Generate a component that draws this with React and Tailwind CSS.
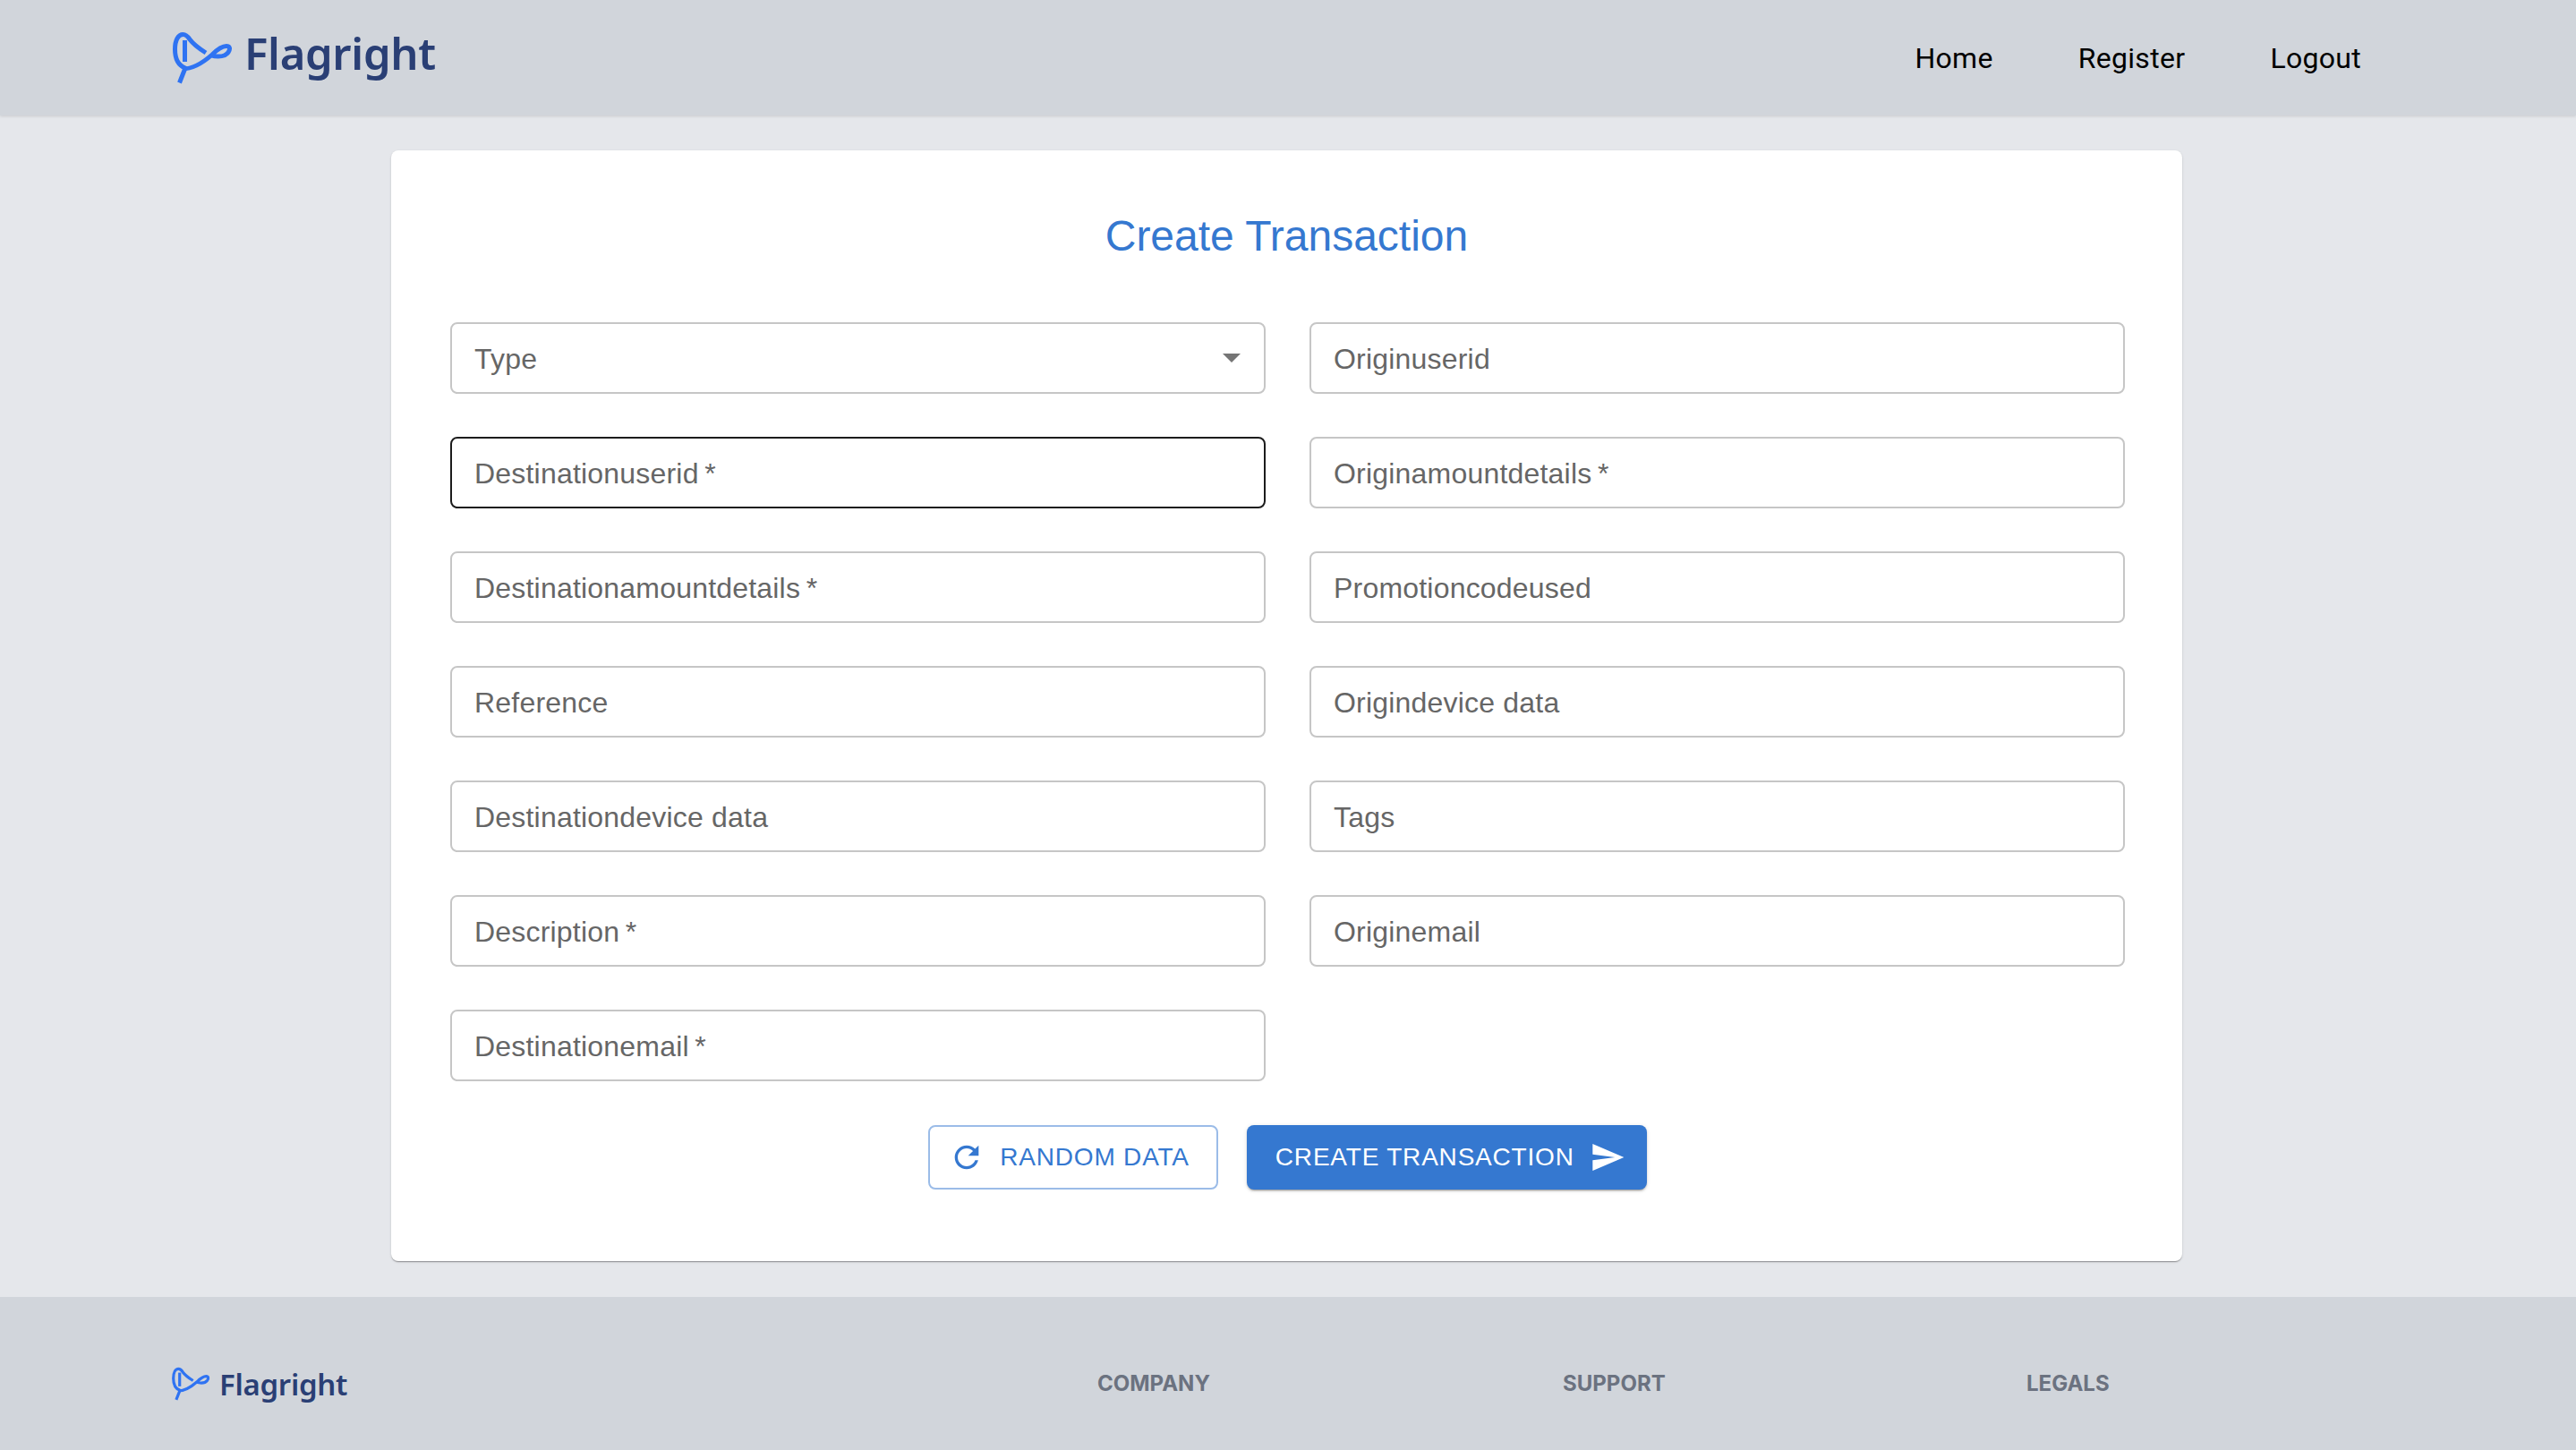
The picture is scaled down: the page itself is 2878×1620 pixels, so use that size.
const sans = "font-['Liberation_Sans',Arial,sans-serif]";

function Logo({ className }) {
  return (
    <svg viewBox="0 0 80 75" className={className} fill="none" stroke="#2f73f2" strokeWidth="5" strokeLinecap="butt" strokeLinejoin="round">
      <path d="M15.5 65.5 L22 49 C14 46 10.5 38 10.5 28 C10.5 18 14 11.5 19.5 11.5 C23 11.5 25 14 27 17 C30 21 37 27 45 32" />
      <path d="M21.5 42 L21.5 18" />
      <path d="M19 50 C31 50 43 42 52 34 C57 29 63 24.5 68 24.5 C72 24.5 72.5 28 70 31.5 C67 35.5 60 37.5 50 34.5" />
    </svg>
  );
}

function Field({ label, required, focused, select }) {
  return (
    <div className={`flex h-[80px] items-center rounded-lg border-2 bg-white pl-[25px] pr-[26px] ${focused ? "border-[#1c1c1c]" : "border-[#c6c6c6]"}`}>
      <span className={`${sans} pt-[1px] text-[32px] leading-none tracking-[0.2px] text-[#666666]`}>
        {label}
        {required && <span>{"\u2009*"}</span>}
      </span>
      {select && (
        <svg viewBox="0 0 20 10" className="ml-auto h-[10px] w-[20px]">
          <path d="M0 0 H20 L10 10 Z" fill="#757575" />
        </svg>
      )}
    </div>
  );
}

const fields = [
  { label: "Type", select: true },
  { label: "Originuserid" },
  { label: "Destinationuserid", required: true, focused: true },
  { label: "Originamountdetails", required: true },
  { label: "Destinationamountdetails", required: true },
  { label: "Promotioncodeused" },
  { label: "Reference" },
  { label: "Origindevice data" },
  { label: "Destinationdevice data" },
  { label: "Tags" },
  { label: "Description", required: true },
  { label: "Originemail" },
  { label: "Destinationemail", required: true },
];

export default function App() {
  return (
    <div className="flex min-h-screen flex-col bg-[#e5e7eb]">
      <header className="flex h-[129px] items-center justify-between bg-[#d1d5db] pl-[185px] pr-[240px] shadow-[0_1px_3px_rgba(0,0,0,0.12)]">
        <div className="flex items-center">
          <Logo className="h-[75px] w-[80px] shrink-0" />
          <span className="mb-[10px] ml-[8px] font-['Noto_Sans',sans-serif] text-[49px] font-semibold leading-none tracking-[-0.3px] text-[#2a3f75]">Flagright</span>
        </div>
        <nav className="flex gap-[95px] font-['Roboto',sans-serif] text-[32px] leading-none tracking-[0.3px] text-black">
          <a>Home</a>
          <a>Register</a>
          <a>Logout</a>
        </nav>
      </header>

      <main className="flex-1 pb-[40px] pt-[39px]">
        <div className="ml-[437px] w-[2001px] rounded-lg bg-white pb-[80px] pl-[66px] pr-[64px] pt-[64px] shadow-[0_2px_1px_-1px_rgba(0,0,0,0.2),0_1px_1px_rgba(0,0,0,0.14),0_1px_3px_rgba(0,0,0,0.12)]">
          <h1 className={`${sans} mb-[64px] pr-[2px] text-center text-[48px] leading-[64px] text-[#3578d0]`}>Create Transaction</h1>
          <div className="grid grid-cols-2 gap-x-[49px] gap-y-[48px]">
            {fields.map((f) => (
              <Field key={f.label} {...f} />
            ))}
          </div>
          <div className="mt-[49px] flex justify-center gap-[32px]">
            <button className={`${sans} flex h-[72px] items-center gap-[17px] rounded-lg border-2 border-[#9bbce8] bg-white pl-[21px] pr-[30px] text-[28px] tracking-[0.8px] text-[#3578d0]`}>
              <svg viewBox="0 0 24 24" className="h-[40px] w-[40px]" fill="#3578d0">
                <path d="M17.65 6.35C16.2 4.9 14.21 4 12 4c-4.42 0-7.99 3.58-7.99 8s3.57 8 7.99 8c3.73 0 6.84-2.55 7.73-6h-2.08c-.82 2.33-3.04 4-5.65 4-3.31 0-6-2.69-6-6s2.69-6 6-6c1.66 0 3.14.69 4.22 1.78L13 11h7V4l-2.35 2.35z" />
              </svg>
              RANDOM DATA
            </button>
            <button className={`${sans} flex h-[72px] items-center gap-[17px] rounded-lg bg-[#3578d0] pl-[32px] pr-[24px] text-[28px] tracking-[0.8px] text-white shadow-[0_3px_1px_-2px_rgba(0,0,0,0.2),0_2px_2px_rgba(0,0,0,0.14),0_1px_5px_rgba(0,0,0,0.12)]`}>
              CREATE TRANSACTION
              <svg viewBox="0 0 24 24" className="h-[40px] w-[40px]" fill="#ffffff">
                <path d="M2.01 21 23 12 2.01 3 2 10l15 2-15 2z" />
              </svg>
            </button>
          </div>
        </div>
      </main>

      <footer className="flex h-[171px] items-start bg-[#d1d5db] pl-[187px] pt-[62px]">
        <div className="mt-[11px] flex w-[1039px] items-center">
          <Logo className="h-[48px] w-[51px] shrink-0" />
          <span className="ml-[7px] font-['Noto_Sans',sans-serif] text-[33px] font-semibold leading-none tracking-[-0.3px] text-[#2a3f75]">Flagright</span>
        </div>
        <div className="flex pt-[23px] font-['Inter',sans-serif] text-[24px] font-bold leading-none text-[#6b7280]">
          <span className="w-[520px]">COMPANY</span>
          <span className="w-[518px]">SUPPORT</span>
          <span>LEGALS</span>
        </div>
      </footer>
    </div>
  );
}
